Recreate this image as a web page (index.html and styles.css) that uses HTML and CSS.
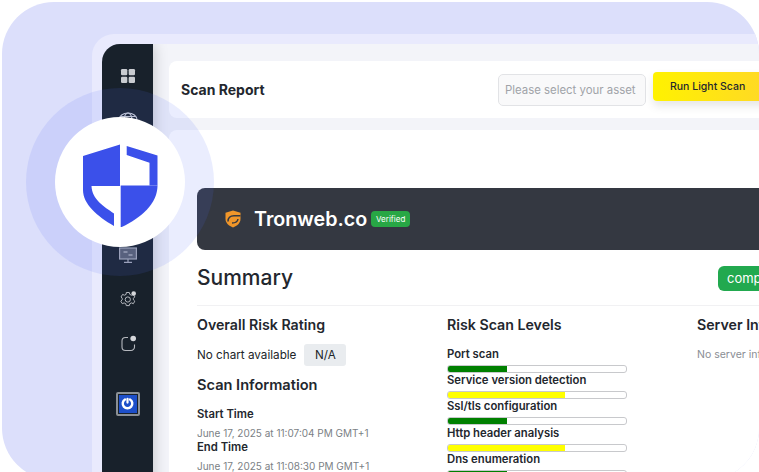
FILE: index.html
```html
<!DOCTYPE html>
<html lang="en">
<head>
  <meta charset="UTF-8" />
  <title>Scan Report</title>
  <link rel="stylesheet" href="styles.css">
</head>
<body>
  <div class="hero">
    <div class="frame">
      <div class="app">
        <aside class="sidebar">
          <svg class="nav-icon" viewBox="0 0 24 24"><g fill="#c9ccd1"><rect x="5" y="5" width="6.3" height="6.3" rx="1.2"/><rect x="12.700" y="5" width="6.300" height="6.300" rx="1.200"/><rect x="5" y="12.700" width="6.300" height="6.300" rx="1.200"/><rect x="12.700" y="12.700" width="6.300" height="6.300" rx="1.200"/></g></svg>
          <svg class="nav-icon" viewBox="0 0 24 24"><g fill="none" stroke="#c9ccd1" stroke-width="1.200"><ellipse cx="12" cy="11" rx="9" ry="7"/><ellipse cx="12" cy="11" rx="4" ry="7"/><path d="M3 11h18M4.500 7.500h15"/></g></svg>
          <div class="nav-icon"></div>
          <div class="nav-icon"></div>
          <svg class="nav-icon" viewBox="0 0 24 24"><g fill="none" stroke="#a5a9b3" stroke-width="1.200"><rect x="3.600" y="6" width="16.800" height="11" fill="#59606e"/><path d="M12 17v3M8 20.400h8"/><path d="M7.500 10h4M12.500 13h4" stroke="#c9ccd1"/></g></svg>
          <svg class="nav-icon" viewBox="0 0 24 24"><g fill="none" stroke="#b5b8be" stroke-width="1"><path d="M10.300 5.500h3l.5 1.900 1.700.8 1.800-.8 1.500 2.500-1.400 1.400v1.500l1.400 1.400-1.500 2.500-1.800-.8-1.700.8-.5 1.900h-3l-.5-1.900-1.700-.8-1.800.8-1.500-2.500 1.400-1.400v-1.500L5.100 9.900l1.500-2.500 1.800.8 1.700-.8z"/><circle cx="11.800" cy="12.500" r="2.600"/></g><circle cx="17.700" cy="6.500" r="2.300" fill="#d5d7db"/></svg>
          <svg class="nav-icon" viewBox="0 0 24 24"><path d="M12 6.500H9.500A3.500 3.500 0 0 0 6 10v6A3.500 3.500 0 0 0 9.500 19.500h5.500a3.500 3.500 0 0 0 3.500-3.500V13.500" fill="none" stroke="#b5b8be" stroke-width="1.100"/><circle cx="17.200" cy="7.500" r="2.800" fill="#d5d7db"/></svg>
          <div class="power">
            <svg viewBox="0 0 16 16"><path d="M5.300 3.700a5.100 5.100 0 1 0 5.400 0" fill="none" stroke="#fff" stroke-width="2.600" stroke-linecap="round"/><path d="M8 3v4" stroke="#fff" stroke-width="2.400" stroke-linecap="round"/></svg>
          </div>
        </aside>

        <main class="main">
          <header class="topbar">
            <h1 class="page-title">Scan Report</h1>
            <div class="asset-select">Please select your asset</div>
            <button class="run-btn">Run Light Scan</button>
          </header>

          <section class="report">
            <div class="banner">
              <svg class="banner-logo" viewBox="0 0 16 18">
                <path d="M8 .5 15.500 2.700V9c0 4-3.400 6.900-7.500 8.500C3.900 15.900.5 13 .5 9V2.700z" fill="#f0962a"/>
                <path d="M3 11.500C3 7.500 5.500 5.700 9 5.700h6.500" fill="none" stroke="#343841" stroke-width="1.500"/>
                <path d="M13 9C12.600 11.600 10.500 13 7 13" fill="none" stroke="#343841" stroke-width="1.500"/>
              </svg>
              <span class="banner-name">Tronweb.co</span>
              <span class="badge">Verified</span>
            </div>

            <div class="summary-row">
              <h2 class="summary-title">Summary</h2>
              <span class="status-pill">completed</span>
            </div>

            <div class="columns">
              <div>
                <h3 class="col-title">Overall Risk Rating</h3>
                <div class="risk-row">
                  <span>No chart available</span>
                  <span class="na-pill">N/A</span>
                </div>
                <h3 class="col-title info-title">Scan Information</h3>
                <div class="info-label first">Start Time</div>
                <div class="info-value">June 17, 2025 at 11:07:04 PM GMT+1</div>
                <div class="info-label">End Time</div>
                <div class="info-value">June 17, 2025 at 11:08:30 PM GMT+1</div>
              </div>

              <div>
                <h3 class="col-title">Risk Scan Levels</h3>
                <div class="levels">
                  <div class="level">
                    <div class="level-name">Port scan</div>
                    <div class="bar"><div class="bar-fill low" style="width:33%"></div></div>
                  </div>
                  <div class="level">
                    <div class="level-name">Service version detection</div>
                    <div class="bar"><div class="bar-fill mid" style="width:66%"></div></div>
                  </div>
                  <div class="level">
                    <div class="level-name">Ssl/tls configuration</div>
                    <div class="bar"><div class="bar-fill low" style="width:33%"></div></div>
                  </div>
                  <div class="level">
                    <div class="level-name">Http header analysis</div>
                    <div class="bar"><div class="bar-fill mid" style="width:66%"></div></div>
                  </div>
                  <div class="level">
                    <div class="level-name">Dns enumeration</div>
                    <div class="bar"><div class="bar-fill low" style="width:33%"></div></div>
                  </div>
                </div>
              </div>

              <div>
                <h3 class="col-title">Server Information</h3>
                <p class="no-server">No server information</p>
              </div>
            </div>
          </section>
        </main>
      </div>
    </div>

    <div class="halo">
      <div class="disc">
        <svg class="shield" viewBox="75 136 90 90">
          <path d="M120 143.500 83 155v34c0 14 14 26 31 36v-12.500c-10-7-22-14-22.500-27.500H120z" fill="#3b50ea"/>
          <path d="M126.700 145 157.500 154.500V184.500H149.500V161.800L126.700 154z" fill="#3b50ea"/>
          <path d="M120.700 184.500H157.500C157.500 203 141 217 120.700 226.500z" fill="#3b50ea"/>
        </svg>
      </div>
    </div>
  </div>
</body>
</html>
```

FILE: styles.css
```css
html, body {
  margin: 0;
  padding: 0;
  background: white;
  overflow: hidden;
  height: 100%;
  font-family: Inter, "Noto Sans", sans-serif;
  color: #212529;
}

*, *::before, *::after {
  box-sizing: border-box;
}

.hero {
  position: relative;
  margin: 2px 0 0 2px;
  width: 757px;
  height: 478px;
  padding: 32px 0 0 90px;
  background: #dcdffb;
  border-radius: 52px;
  overflow: hidden;
}

.frame {
  width: 900px;
  height: 500px;
  padding: 10px 0 0 10px;
  background: #e9eafd;
  border-radius: 22px 0 0 0;
}

.app {
  display: flex;
  height: 100%;
  border-radius: 18px 0 0 0;
  overflow: hidden;
}

/* sidebar */
.sidebar {
  flex: none;
  width: 51px;
  padding-top: 20px;
  display: flex;
  flex-direction: column;
  align-items: center;
  gap: 20.500px;
  background: #18212b;
  box-shadow: 0 0 14px rgba(0, 0, 0, 0.22);
  z-index: 1;
}

.nav-icon {
  display: block;
  flex: none;
  width: 24px;
  height: 24px;
}

.power {
  flex: none;
  width: 24px;
  height: 24px;
  margin-top: 16px;
  padding: 1px;
  background: #1d4fc9 content-box;
  border: 2px solid #8b9096;
  border-radius: 2px;
  display: flex;
  align-items: center;
  justify-content: center;
}

.power svg {
  display: block;
  width: 15px;
  height: 15px;
}

/* main area */
.main {
  flex: 1;
  min-width: 0;
  padding: 17px 0 0 16px;
  background: #f3f4f9;
}

.topbar {
  display: flex;
  align-items: center;
  height: 57px;
  padding: 0 12px;
  background: white;
  border-radius: 8px;
}

.page-title {
  width: 317px;
  margin: 0;
  font-size: 14px;
  font-weight: 700;
  color: #23272e;
}

.asset-select {
  width: 148px;
  height: 32px;
  margin-top: 1px;
  padding: 0 6px;
  display: flex;
  align-items: center;
  font-size: 11.400px;
  white-space: nowrap;
  color: #a0a3a8;
  background: #f9f9fa;
  border: 1px solid #e2e3e6;
  border-radius: 5px;
}

.run-btn {
  width: 130px;
  height: 29px;
  margin: -6px 0 0 7px;
  padding: 0 0 0 17px;
  text-align: left;
  font-family: inherit;
  font-size: 10.500px;
  font-weight: 500;
  color: #23272e;
  border: none;
  border-radius: 4px;
  background: linear-gradient(90deg, #fff200, #ffd52b);
  box-shadow: 0 5px 10px rgba(0, 0, 0, 0.1);
}

.report {
  height: 400px;
  margin-top: 12px;
  padding: 58px 0 0 28px;
  background: white;
  border-radius: 8px;
}

.banner {
  display: flex;
  align-items: center;
  height: 62px;
  padding-left: 28px;
  background: #343841;
  border-radius: 8px 0 0 8px;
}

.banner-logo {
  flex: none;
  width: 16px;
  height: 18px;
}

.banner-name {
  margin-left: 13px;
  font-size: 19.700px;
  font-weight: 600;
  color: white;
  width: 117px;
  white-space: nowrap;
}

.badge {
  padding: 0 5px;
  height: 16px;
  line-height: 16px;
  font-size: 8px;
  color: white;
  background: #28a745;
  border-radius: 4px;
}

.summary-row {
  display: flex;
  align-items: center;
  height: 56px;
  border-bottom: 1px solid #f1f1f3;
}

.summary-title {
  width: 521px;
  margin: 0;
  font-size: 21px;
  font-weight: 500;
  color: #23272e;
}

.status-pill {
  height: 25px;
  margin-top: 2px;
  padding: 0 9px;
  line-height: 25px;
  font-size: 13px;
  color: white;
  background: #22a94f;
  border-radius: 6px;
}

.columns {
  display: grid;
  grid-template-columns: repeat(3, 250px);
  padding-top: 10px;
}

.col-title {
  margin: 0;
  font-size: 14.200px;
  line-height: 18px;
  font-weight: 600;
  color: #23272e;
  white-space: nowrap;
}

.risk-row {
  display: flex;
  align-items: center;
  gap: 8px;
  margin-top: 10px;
  font-size: 11.700px;
}

.na-pill {
  width: 42px;
  height: 22px;
  line-height: 22px;
  text-align: center;
  background: #e9ecef;
  border-radius: 3px;
}

.info-title {
  margin-top: 10px;
  font-size: 14.600px;
}

.info-label {
  font-size: 11.300px;
  line-height: 14px;
  font-weight: 600;
  color: #23272e;
}

.info-label.first {
  margin-top: 13px;
}

.info-value {
  margin-top: 5px;
  font-size: 10px;
  line-height: 14px;
  white-space: nowrap;
  color: #7b7f85;
}

.levels {
  margin-top: 13px;
}

.level {
  height: 26.200px;
}

.level-name {
  font-size: 11.300px;
  line-height: 14px;
  font-weight: 600;
  color: #23272e;
}

.bar {
  width: 180px;
  height: 8px;
  margin-top: 4px;
  background: white;
  border: 1px solid #c8c9cc;
  border-radius: 3px;
  overflow: hidden;
}

.bar-fill {
  height: 100%;
}

.bar-fill.low {
  background: green;
}

.bar-fill.mid {
  background: yellow;
}

.no-server {
  margin: 14px 0 0;
  font-size: 10.500px;
  line-height: 14px;
  color: #8a8e94;
  white-space: nowrap;
}

/* floating badge over the window */
.halo {
  position: absolute;
  left: 24px;
  top: 86px;
  width: 188px;
  height: 188px;
  display: flex;
  align-items: center;
  justify-content: center;
  background: rgba(85, 110, 250, 0.12);
  border-radius: 50%;
  z-index: 2;
}

.disc {
  width: 130px;
  height: 130px;
  display: flex;
  align-items: center;
  justify-content: center;
  background: white;
  border-radius: 50%;
}

.shield {
  display: block;
  width: 90px;
  height: 90px;
}
```
